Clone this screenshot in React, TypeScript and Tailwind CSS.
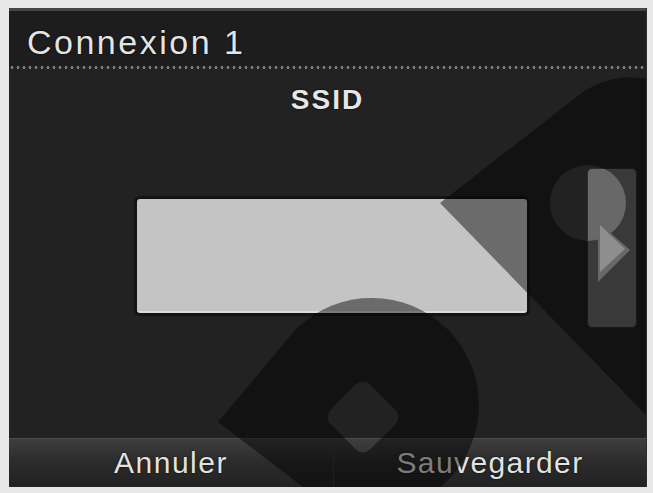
import React from "react";

function Watermark() {
  return (
    <svg
      className="absolute inset-0 pointer-events-none"
      width="638"
      height="479"
      viewBox="0 0 638 479"
    >
      <defs>
        <mask id="wm">
          <rect x="0" y="0" width="638" height="479" fill="white" />
          <circle cx="579" cy="195" r="38" fill="black" />
          <polygon points="589,214 621,242 589,274" fill="black" />
          <rect
            x="326"
            y="381"
            width="56"
            height="56"
            rx="10"
            fill="black"
            transform="rotate(45 354 409)"
          />
        </mask>
      </defs>
      <g mask="url(#wm)" fill="black" fillOpacity="0.45">
        <path d="M431,195 L570,87 A83 83 0 0 1 638,71 L638,408 Z" />
        <path d="M209,414 L281,328 A107 107 0 1 1 298,482 Z" />
      </g>
    </svg>
  );
}

export default function App() {
  return (
    <div className="w-[653px] h-[493px] bg-[#e8e8e8] pt-[8px] pl-[9px] font-['Liberation_Sans',Arial,sans-serif]">
      <div className="relative w-[638px] h-[479px] bg-[#222222] flex flex-col overflow-hidden border-r border-[#2e2e2e]">
        {/* Title bar */}
        <div className="h-[58px] bg-[#1d1d1d] border-t-[3px] border-[#464646] pl-[18px] pt-[14px]">
          <div className="text-[34px] leading-[34px] tracking-[2.5px] text-[#e4e4e4] [text-shadow:0_0_2px_#000]">
            Connexion 1
          </div>
        </div>
        <div className="h-[3px] bg-[radial-gradient(circle,#7c7c7c_1.1px,transparent_1.7px)] bg-[length:6px_3px]" />
        {/* Body */}
        <div className="flex-1 flex flex-col pt-[17px]">
          <div className="text-center text-[28px] leading-[28px] font-bold tracking-[2px] text-[#e6e6e6] [text-shadow:0_0_2px_#000]">
            SSID
          </div>
          <div className="flex items-start mt-[54px] pl-[128px]">
            <div className="w-[390px] h-[114px] mt-[31px] bg-[#c4c4c4] rounded-[3px] shadow-[0_0_0_3px_#141414] border-b-2 border-[#dcdcdc]" />
            <div className="ml-[60px] w-[50px] h-[160px] rounded-[5px] bg-[#686868] border border-[#2c2c2c] flex items-center justify-center">
              <svg width="26" height="48" viewBox="0 0 26 48" className="ml-[2px] mt-[2px]">
                <polygon points="0,0 25,24 0,47" fill="#8e8e8e" />
              </svg>
            </div>
          </div>
        </div>
        {/* Bottom bar */}
        <div className="h-[49px] flex bg-gradient-to-b from-[#3e3e3e] via-[#2b2b2b] to-[#222222] border-t border-[#4a4a4a]">
          <div className="w-[324px] flex items-center justify-center text-[30px] leading-[30px] tracking-[1.5px] text-[#e2e2e2] [text-shadow:0_0_2px_#000]">
            Annuler
          </div>
          <div className="w-[1px] bg-[#161616] border-r border-[#3a3a3a]" />
          <div className="flex-1 flex items-center justify-center text-[30px] leading-[30px] tracking-[1.4px] text-[#e2e2e2] [text-shadow:0_0_2px_#000]">
            Sauvegarder
          </div>
        </div>
        <Watermark />
      </div>
    </div>
  );
}
